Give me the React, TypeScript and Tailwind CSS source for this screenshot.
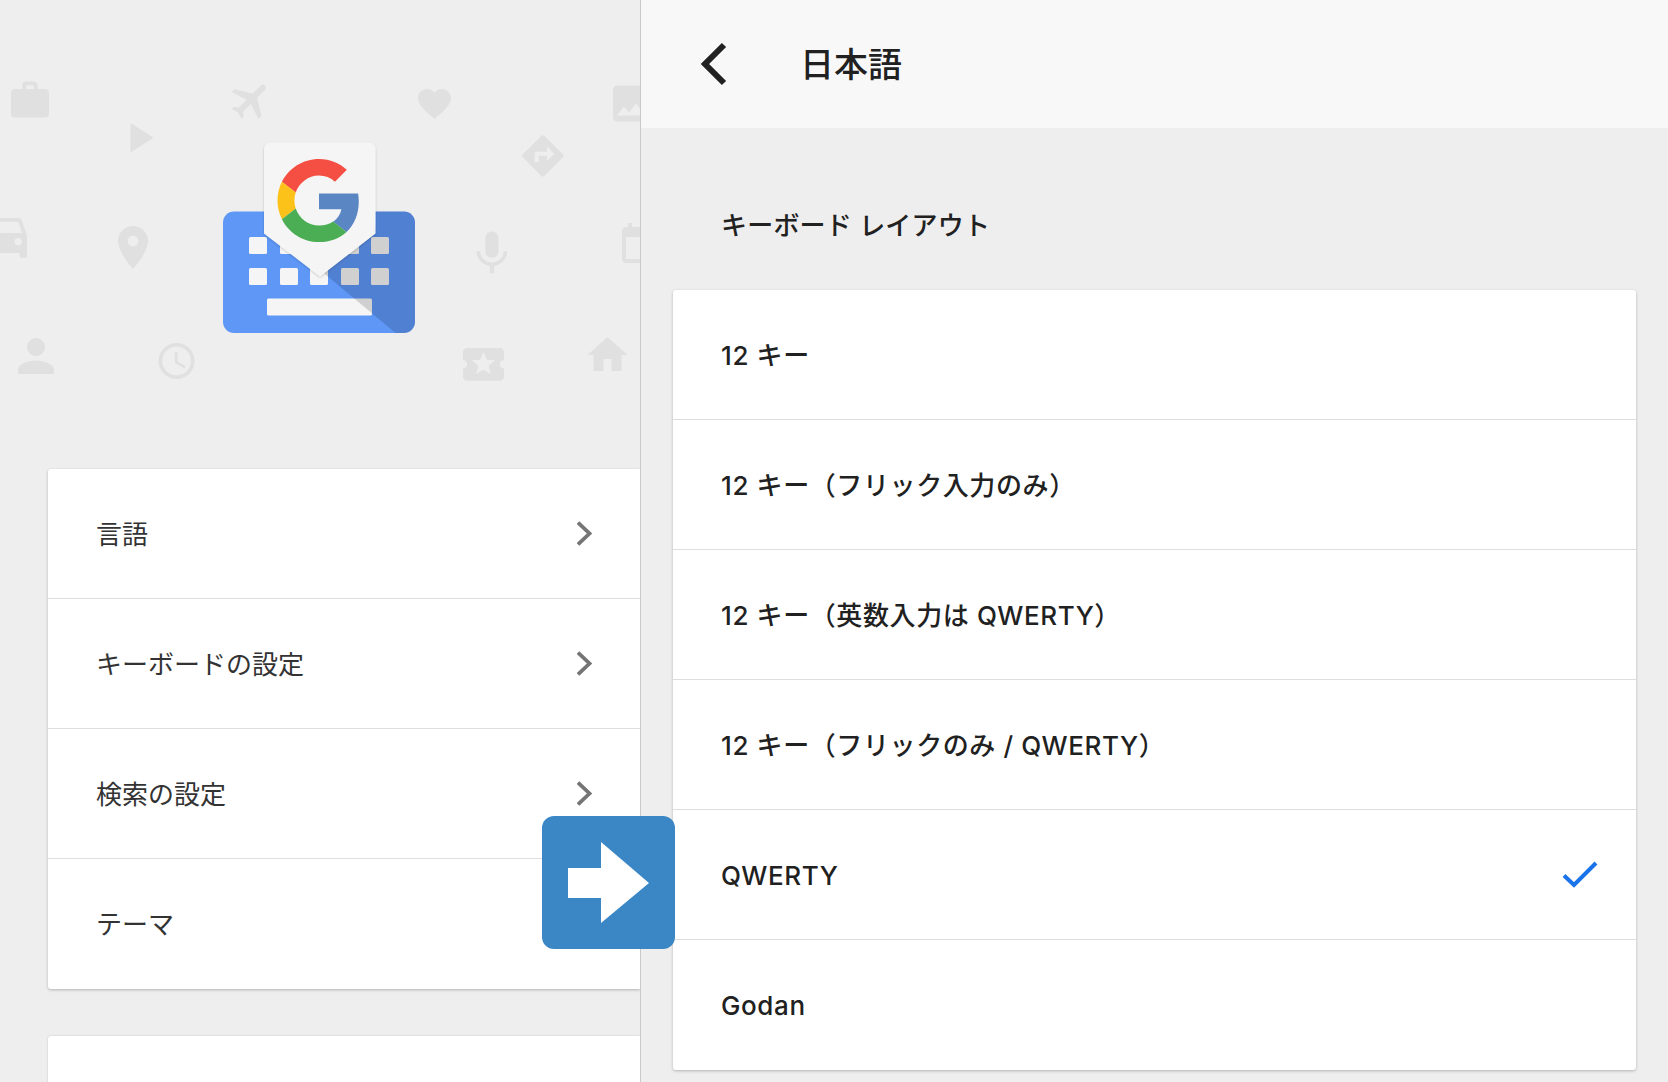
const FONT = "font-['Inter','Noto_Sans_CJK_JP',sans-serif]";

const icons: { d: string; t: string }[] = [
  { t: "translate(7.2 77.6) scale(1.9)", d: "M20 6h-4V4c0-1.11-.89-2-2-2h-4c-1.11 0-2 .89-2 2v2H4c-1.11 0-1.99.89-1.99 2L2 19c0 1.11.89 2 2 2h16c1.11 0 2-.89 2-2V8c0-1.11-.89-2-2-2zm-6 0h-4V4h4v2z" },
  { t: "translate(113.7 112.5) scale(2.1)", d: "M8 5v14l11-7z" },
  { t: "translate(251.5 100.5) rotate(45) scale(2) translate(-12 -12)", d: "M21 16v-2l-8-5V3.5c0-.83-.67-1.5-1.5-1.5S10 2.67 10 3.5V9l-8 5v2l8-2.5V19l-2 1.5V22l3.5-1 3.5 1v-1.5L13 19v-5.5l8 2.5z" },
  { t: "translate(414.7 84) scale(1.65)", d: "M12 21.35l-1.45-1.32C5.4 15.36 2 12.28 2 8.5 2 5.42 4.42 3 7.5 3c1.74 0 3.41.81 4.5 2.09C13.09 3.81 14.76 3 16.5 3 19.58 3 22 5.42 22 8.5c0 3.78-3.4 6.86-8.55 11.54L12 21.35z" },
  { t: "translate(607 79.5) scale(2)", d: "M21 19V5c0-1.1-.9-2-2-2H5c-1.1 0-2 .9-2 2v14c0 1.1.9 2 2 2h14c1.1 0 2-.9 2-2zM8.5 13.5l2.5 3.01L14.5 12l4.5 6H5l3.5-4.5z" },
  { t: "translate(518 131) scale(2.07)", d: "M21.71 11.29l-9-9c-.39-.39-1.02-.39-1.41 0l-9 9c-.39.39-.39 1.02 0 1.41l9 9c.39.39 1.02.39 1.41 0l9-9c.39-.38.39-1.01 0-1.41zM14 14.5V12h-4v3H8v-4c0-.55.45-1 1-1h5V7.5l3.5 3.5-3.5 3.5z" },
  { t: "translate(-25.5 205.5) scale(2.5)", d: "M18.92 6.01C18.72 5.42 18.16 5 17.5 5h-11c-.66 0-1.21.42-1.42 1.01L3 12v8c0 .55.45 1 1 1h1c.55 0 1-.45 1-1v-1h12v1c0 .55.45 1 1 1h1c.55 0 1-.45 1-1v-8l-2.08-5.99zM6.5 16c-.83 0-1.5-.67-1.5-1.5S5.67 13 6.5 13s1.5.67 1.5 1.5S7.33 16 6.5 16zm11 0c-.83 0-1.5-.67-1.5-1.5s.67-1.5 1.5-1.5 1.5.67 1.5 1.5-.67 1.5-1.5 1.5zM5 11l1.5-4.5h11L19 11H5z" },
  { t: "translate(107.25 221.7) scale(2.15)", d: "M12 2C8.13 2 5 5.13 5 9c0 5.25 7 13 7 13s7-7.75 7-13c0-3.87-3.13-7-7-7zm0 9.5c-1.38 0-2.5-1.12-2.5-2.5s1.12-2.5 2.5-2.5 2.5 1.12 2.5 2.5-1.12 2.5-2.5 2.5z" },
  { t: "translate(465.5 227) scale(2.2)", d: "M12 14c1.66 0 2.99-1.34 2.99-3L15 5c0-1.66-1.34-3-3-3S9 3.34 9 5v6c0 1.66 1.34 3 3 3zm5.3-3c0 3-2.54 5.1-5.3 5.1S6.7 14 6.7 11H5c0 3.41 2.72 6.23 6 6.72V21h2v-3.28c3.28-.48 6-3.3 6-6.72h-1.7z" },
  { t: "translate(616 221) scale(2)", d: "M19 3h-1V1h-2v2H8V1H6v2H5c-1.11 0-1.99.9-1.99 2L3 19c0 1.1.89 2 2 2h14c1.1 0 2-.9 2-2V5c0-1.1-.9-2-2-2zm0 16H5V8h14v11z" },
  { t: "translate(9 329) scale(2.25)", d: "M12 12c2.21 0 4-1.79 4-4s-1.79-4-4-4-4 1.79-4 4 1.79 4 4 4zm0 2c-2.67 0-8 1.34-8 4v2h16v-2c0-2.66-5.33-4-8-4z" },
  { t: "translate(155 339.4) scale(1.8)", d: "M11.99 2C6.47 2 2 6.48 2 12s4.47 10 9.99 10C17.52 22 22 17.52 22 12S17.52 2 11.99 2zM12 20c-4.42 0-8-3.58-8-8s3.58-8 8-8 8 3.58 8 8-3.58 8-8 8zm.5-13H11v6l5.25 3.15.75-1.23-4.5-2.67z" },
  { t: "translate(458.9 339.8) scale(2.05)", d: "M20 12c0-1.1.9-2 2-2V6c0-1.1-.9-2-2-2H4c-1.1 0-1.99.9-1.99 2v4c1.1 0 1.99.9 1.99 2s-.89 2-2 2v4c0 1.1.9 2 2 2h16c1.1 0 2-.9 2-2v-4c-1.1 0-2-.9-2-2zm-4.42 4.8L12 14.5l-3.58 2.3 1.08-4.12-3.29-2.69 4.24-.25L12 5.8l1.54 3.95 4.24.25-3.29 2.69 1.09 4.11z" },
  { t: "translate(583.5 331) scale(2)", d: "M10 20v-6h4v6h5v-8h3L12 3 2 12h3v8z" },
];

const keyXs = [249, 280, 310, 341, 371];

function Hero() {
  return (
    <svg className="block w-[640px] h-[469px]" viewBox="0 0 640 469">
      <defs>
        <clipPath id="kb">
          <rect x="223" y="211.5" width="192" height="121.5" rx="11" />
        </clipPath>
        <filter id="pinShadow" x="-20%" y="-20%" width="140%" height="140%">
          <feDropShadow dx="0" dy="1" stdDeviation="1.2" floodColor="#000" floodOpacity="0.2" />
        </filter>
      </defs>
      <g fill="#e0e0e0">
        {icons.map((ic, i) => (
          <path key={i} d={ic.d} transform={ic.t} />
        ))}
      </g>
      <rect x="223" y="211.5" width="192" height="121.5" rx="11" fill="#5e97f6" />
      {keyXs.map((x) => (
        <rect key={`a${x}`} x={x} y="237" width="18" height="17" rx="1.5" fill="#f5f5f5" />
      ))}
      {keyXs.map((x) => (
        <rect key={`b${x}`} x={x} y="268" width="18" height="17" rx="1.5" fill="#f5f5f5" />
      ))}
      <rect x="267" y="298.5" width="105" height="17" rx="1.5" fill="#f5f5f5" />
      <polygon clipPath="url(#kb)" points="376,205 420,205 420,340 404,340 320,270 376,225" fill="#000" fillOpacity="0.15" />
      <path
        d="M270 142.5H368.5a7 7 0 0 1 7 7V233.5L320 276.5L264 233.5V149.5a7 7 0 0 1 6-7z"
        fill="#f5f5f5"
        filter="url(#pinShadow)"
      />
      <g transform="translate(277.5 159) scale(1.73)">
        <path fill="#f44f42" d="M24 9.5c3.54 0 6.71 1.22 9.21 3.6l6.85-6.85C35.9 2.38 30.47 0 24 0 14.62 0 6.51 5.38 2.56 13.22l7.98 6.19C12.43 13.72 17.74 9.5 24 9.5z" />
        <path fill="#5a86c4" d="M46.98 24.55c0-1.57-.15-3.09-.38-4.55H24v9.02h12.94c-.58 2.96-2.26 5.48-4.78 7.18l7.73 6c4.51-4.18 7.09-10.36 7.09-17.65z" />
        <path fill="#fcc21a" d="M10.53 28.59c-.48-1.45-.76-2.99-.76-4.59s.27-3.14.76-4.59l-7.98-6.19C.92 16.46 0 20.12 0 24c0 3.88.92 7.54 2.56 10.78l7.97-6.19z" />
        <path fill="#4cae54" d="M24 48c6.48 0 11.93-2.13 15.89-5.81l-7.73-6c-2.15 1.45-4.92 2.3-8.16 2.3-6.26 0-11.57-4.22-13.47-9.91l-7.98 6.19C6.51 42.62 14.62 48 24 48z" />
      </g>
    </svg>
  );
}

function Chevron() {
  return (
    <svg className="w-[16px] h-[26px]" viewBox="0 0 16 26" fill="none">
      <polyline points="1,1.5 12.5,12.5 1,23.5" stroke="#757575" strokeWidth="3.8" />
    </svg>
  );
}

const leftRows = ["言語", "キーボードの設定", "検索の設定", "テーマ"];
const rightRows = [
  "12 キー",
  "12 キー（フリック入力のみ）",
  "12 キー（英数入力は QWERTY）",
  "12 キー（フリックのみ / QWERTY）",
  "QWERTY",
  "Godan",
];

export default function App() {
  return (
    <div className={`${FONT} relative flex w-[1668px] h-[1082px] overflow-hidden bg-[#eeeeee] text-[#212121]`}>
      <aside className="w-[641px] shrink-0 border-r border-[#c9c9c9] overflow-hidden">
        <Hero />
        <div className="ml-[48px] bg-white rounded-l-[3px] shadow-[0_1px_3px_rgba(0,0,0,0.25)]">
          {leftRows.map((r, i) => (
            <div
              key={r}
              className={`h-[130px] flex items-center justify-between pl-[48px] pr-[47px] text-[26px] text-[#333333] ${i < 3 ? "border-b border-[#dedede]" : ""}`}
            >
              <span className="pt-[1px]">{r}</span>
              <Chevron />
            </div>
          ))}
        </div>
        <div className="ml-[48px] mt-[47px] h-[60px] bg-white rounded-tl-[3px] shadow-[0_0_2px_rgba(0,0,0,0.2)]" />
      </aside>

      <main className="flex-1 min-w-0">
        <header className="h-[128px] bg-[#f8f8f8] flex items-center pl-[59px]">
          <svg className="w-[30px] h-[44px]" viewBox="0 0 30 44" fill="none">
            <polyline points="24,3 5,22 24,41" stroke="#212121" strokeWidth="6" />
          </svg>
          <h1 className="ml-[70px] text-[34px] font-medium leading-none pt-[2px]">日本語</h1>
        </header>
        <h2 className="h-[162px] flex items-center pl-[80px] pt-[33px] text-[26px] font-medium tracking-[0.2px]">キーボード レイアウト</h2>
        <div className="ml-[32px] w-[963px] bg-white rounded-[3px] shadow-[0_1px_3px_rgba(0,0,0,0.25)]">
          {rightRows.map((r, i) => (
            <div
              key={r}
              className={`h-[130px] flex items-center justify-between pl-[48px] pr-[38px] text-[26px] font-medium tracking-[0.6px] ${i < 5 ? "border-b border-[#dedede]" : ""}`}
            >
              <span className="pt-[1px]">{r}</span>
              {r === "QWERTY" && (
                <svg className="w-[36px] h-[28px]" viewBox="0 0 36 28" fill="none">
                  <polyline points="2,14.5 12,24 34,2" stroke="#1a73e8" strokeWidth="4" />
                </svg>
              )}
            </div>
          ))}
        </div>
      </main>

      <div className="absolute left-[542px] top-[816px] w-[133px] h-[133px] rounded-[12px] bg-[#3b86c4]">
        <svg className="w-full h-full" viewBox="0 0 133 133">
          <polygon points="26,52 59,52 59,26 107,67 59,107 59,82 26,82" fill="#fff" />
        </svg>
      </div>
    </div>
  );
}
